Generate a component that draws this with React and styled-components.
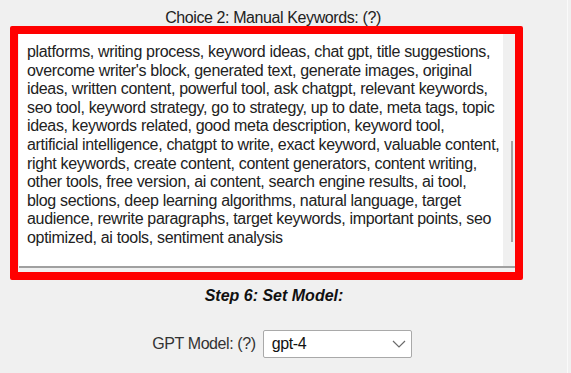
import styled, { createGlobalStyle } from 'styled-components';

const GlobalStyle = createGlobalStyle`
  html, body {
    margin: 0;
    padding: 0;
    background: #f0f0f0;
    font-family: 'Liberation Sans', Arial, sans-serif;
    color: #222;
  }
`;

const keywordLines = [
  'platforms, writing process, keyword ideas, chat gpt, title suggestions,',
  "overcome writer's block, generated text, generate images, original",
  'ideas, written content, powerful tool, ask chatgpt, relevant keywords,',
  'seo tool, keyword strategy, go to strategy, up to date, meta tags, topic',
  'ideas, keywords related, good meta description, keyword tool,',
  'artificial intelligence, chatgpt to write, exact keyword, valuable content,',
  'right keywords, create content, content generators, content writing,',
  'other tools, free version, ai content, search engine results, ai tool,',
  'blog sections, deep learning algorithms, natural language, target',
  'audience, rewrite paragraphs, target keywords, important points, seo',
  'optimized, ai tools, sentiment analysis',
];

function App() {
  return (
    <Page>
      <GlobalStyle />
      <Panel>
        <Label>Choice 2: Manual Keywords: (?)</Label>
        <Highlight>
          <Field>
            <KeywordText>{keywordLines.join('\n')}</KeywordText>
            <ScrollTrack>
              <ScrollThumb />
            </ScrollTrack>
          </Field>
        </Highlight>

        <StepTitle>Step 6: Set Model:</StepTitle>

        <ModelRow>
          <span>GPT Model: (?)</span>
          <SelectBox>
            <span>gpt-4</span>
            <svg width="14" height="8" viewBox="0 0 14 8">
              <path d="M1 1l6 6 6-6" fill="none" stroke="#6b6b6b" strokeWidth="1.2" />
            </svg>
          </SelectBox>
        </ModelRow>
      </Panel>
    </Page>
  );
}

// --------Styles-------

const Page = styled.div`
  width: 571px;
  height: 373px;
  overflow: hidden;
  display: flex;
`;

const Panel = styled.div`
  width: 568px;
  border-right: 1px solid #fafafa;
  padding-top: 9px;
  box-sizing: border-box;
  font-size: 16px;
  letter-spacing: -0.4px;
`;

const Label = styled.div`
  width: 546px;
  text-align: center;
  line-height: 18px;
  color: #222;
`;

const Highlight = styled.div`
  margin: -1px 0 0 10px;
  width: 513px;
  height: 254px;
  box-sizing: border-box;
  border: 8px solid #ff0000;
  border-radius: 2px;
  background: #f0f0f0;
  padding: 0 0 4px 1px;
`;

const Field = styled.div`
  display: flex;
  height: 100%;
  border-bottom: 2px solid #a0a0a0;
  box-sizing: border-box;
`;

const KeywordText = styled.div`
  flex: 1;
  background: #fff;
  white-space: pre;
  padding: 9px 0 0 8px;
  line-height: 18.6px;
  letter-spacing: -0.33px;
  color: #222;
  overflow: hidden;
`;

const ScrollTrack = styled.div`
  width: 12px;
  background: #f0f0f0;
  position: relative;
`;

const ScrollThumb = styled.div`
  position: absolute;
  left: 8px;
  top: 107px;
  width: 2px;
  height: 101px;
  background: #a3a3a3;
`;

const StepTitle = styled.div`
  width: 548px;
  margin-top: 7px;
  text-align: center;
  font-weight: bold;
  font-style: italic;
  line-height: 18px;
  letter-spacing: 0;
  color: #111;
`;

const ModelRow = styled.div`
  width: 548px;
  margin-top: 25px;
  display: flex;
  justify-content: center;
  align-items: center;
  gap: 7px;
  color: #333;
  padding-left: 16px;
  box-sizing: border-box;
`;

const SelectBox = styled.div`
  width: 149px;
  height: 28px;
  box-sizing: border-box;
  border: 1px solid #a9a9a9;
  border-radius: 2px;
  background: #fff;
  display: flex;
  align-items: center;
  justify-content: space-between;
  padding: 0 5px 0 8px;
  color: #111;
`;

export default App;
